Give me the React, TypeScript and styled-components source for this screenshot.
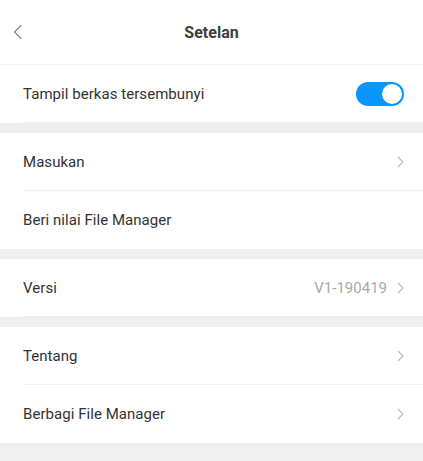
import styled, { createGlobalStyle } from 'styled-components';

const GlobalStyle = createGlobalStyle`
  html, body {
    margin: 0;
    padding: 0;
    background: #efefef;
    font-family: Roboto, "Noto Sans", "Liberation Sans", sans-serif;
  }
`;

const Page = styled.div`
  width: 423px;
  min-height: 461px;
  background: #efefef;
  display: flex;
  flex-direction: column;
`;

const Header = styled.header`
  height: 64px;
  display: grid;
  grid-template-columns: 46px 1fr 46px;
  align-items: center;
  background: #fff;
  border-bottom: 1px solid #f3f3f3;
`;

const BackButton = styled.button`
  border: 0;
  background: none;
  padding: 0 0 0 13px;
  height: 100%;
  display: flex;
  align-items: center;
  cursor: pointer;
`;

const Title = styled.h1`
  margin: 0;
  text-align: center;
  font-size: 16px;
  font-weight: 700;
  color: #3d3d3d;
`;

const Group = styled.section`
  background: #fff;
  margin-bottom: 10px;
`;

const Row = styled.div<{ $divider?: boolean }>`
  height: 58px;
  margin-left: 23px;
  padding-right: 19px;
  display: flex;
  align-items: center;
  box-sizing: border-box;
  border-bottom: ${(p) => (p.$divider ? '1px solid #f0f0f0' : '0')};
`;

const Label = styled.span`
  flex: 1;
  font-size: 15px;
  color: #333;
  letter-spacing: 0.05px;
`;

const Value = styled.span`
  font-size: 15px;
  color: #a8a8a8;
  margin-right: 10px;
`;

const Toggle = styled.div<{ $on: boolean }>`
  width: 48px;
  height: 24px;
  border-radius: 12px;
  background: ${(p) => (p.$on ? '#0a96ff' : '#ccc')};
  display: flex;
  align-items: center;
  justify-content: ${(p) => (p.$on ? 'flex-end' : 'flex-start')};
  padding: 0 2px;
  box-sizing: border-box;
  margin-right: 0;
`;

const Knob = styled.span`
  width: 20px;
  height: 20px;
  border-radius: 50%;
  background: #fff;
`;

const Chevron = ({ color = '#b8b8b8' }: { color?: string }) => (
  <svg width="7" height="12" viewBox="0 0 7 12" fill="none">
    <path d="M1 1l5 5-5 5" stroke={color} strokeWidth="1.1" />
  </svg>
);

const BackIcon = () => (
  <svg width="10" height="16" viewBox="0 0 10 16" fill="none">
    <path d="M8.5 1L1.5 8l7 7" stroke="#8a8a8a" strokeWidth="1.3" />
  </svg>
);

type Item = { label: string; value?: string; chevron?: boolean };

const groups: Item[][] = [
  [
    { label: 'Masukan', chevron: true },
    { label: 'Beri nilai File Manager' },
  ],
  [{ label: 'Versi', value: 'V1-190419', chevron: true }],
  [
    { label: 'Tentang', chevron: true },
    { label: 'Berbagi File Manager', chevron: true },
  ],
];

export default function App() {
  return (
    <>
      <GlobalStyle />
      <Page>
        <Header>
          <BackButton aria-label="Kembali">
            <BackIcon />
          </BackButton>
          <Title>Setelan</Title>
          <span />
        </Header>
        <Group>
          <Row $divider>
            <Label>Tampil berkas tersembunyi</Label>
            <Toggle $on>
              <Knob />
            </Toggle>
          </Row>
        </Group>
        {groups.map((g, gi) => (
          <Group key={gi}>
            {g.map((item, i) => (
              <Row key={item.label} $divider={i < g.length - 1 || gi === 1}>
                <Label>{item.label}</Label>
                {item.value && <Value>{item.value}</Value>}
                {item.chevron && <Chevron />}
              </Row>
            ))}
          </Group>
        ))}
      </Page>
    </>
  );
}
